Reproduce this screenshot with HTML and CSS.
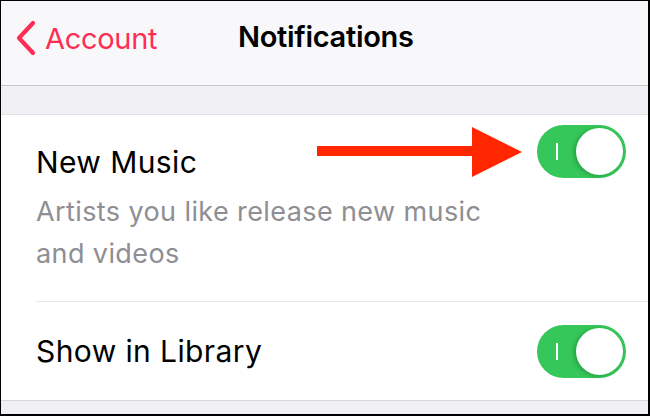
FILE: index.html
```html
<!DOCTYPE html>
<html>
<head>
<meta charset="utf-8">
<link rel="stylesheet" href="styles.css">
</head>
<body>
<div class="frame">
  <header class="nav">
    <div class="back">
      <svg class="chev" width="24" height="36" viewBox="0 0 24 36"><path d="M19 3 L5 18 L19 33" fill="none" stroke="#ff2d55" stroke-width="4.2" stroke-linecap="round" stroke-linejoin="round"/></svg>
      <span class="back-label">Account</span>
    </div>
    <div class="title">Notifications</div>
  </header>
  <div class="gap"></div>
  <section class="group">
    <div class="row row-first">
      <div class="row-text">
        <div class="label">New Music</div>
        <div class="sub">Artists you like release new music<br>and videos</div>
      </div>
      <div class="toggle"><span class="on-mark"></span><span class="knob"></span></div>
    </div>
    <div class="sep"></div>
    <div class="row row-second">
      <div class="label">Show in Library</div>
      <div class="toggle"><span class="on-mark"></span><span class="knob"></span></div>
    </div>
  </section>
  <div class="bottom"></div>
  <svg class="arrow" width="210" height="54" viewBox="0 0 210 54"><rect x="0" y="19" width="158" height="10" fill="#ff2600"/><polygon points="155,0 205,25 155,50" fill="#ff2600"/></svg>
</div>
</body>
</html>
```
FILE: styles.css
```css
* { box-sizing: border-box; }
html, body { margin: 0; padding: 0; }
body { width: 650px; height: 416px; overflow: hidden; background: #fff; font-family: Inter, "Liberation Sans", sans-serif; }
.frame {
  position: relative;
  width: 650px; height: 416px;
  border-style: solid; border-color: #000;
  border-width: 1px 2px 2px 1px;
  background: #f0f0f5;
  display: flex; flex-direction: column;
}
.nav {
  height: 85px;
  background: #f8f8fa;
  border-bottom: 1px solid #c4c4c9;
  position: relative;
  display: flex; align-items: center;
}
.back { display: flex; align-items: center; padding-left: 13px; margin-top: -10px; }
.chev { display: block; }
.back-label { color: #ff2d55; font-size: 29px; margin-left: 7px; letter-spacing: -0.3px; }
.title {
  position: absolute; left: 237px; top: 18px;
  font-size: 29px; font-weight: 600; color: #000; letter-spacing: -0.3px;
}
.gap { height: 29px; border-bottom: 1px solid #e2e2e6; }
.group { background: #fff; display: flex; flex-direction: column; height: 285px; }
.row { display: flex; align-items: center; justify-content: space-between; padding: 0 22px 0 35px; }
.row-first { height: 186px; align-items: flex-start; }
.row-first .row-text { padding-top: 28px; }
.row-first .toggle { margin-top: 10px; }
.label { font-size: 30px; color: #000; letter-spacing: 0.4px; line-height: 38px; }
.sub { font-size: 27px; color: #8e8e93; line-height: 42px; margin-top: 10px; letter-spacing: 0.4px; }
.sep { height: 1px; background: #e6e6e8; margin-left: 35px; }
.row-second { flex: 1; }
.toggle {
  position: relative;
  width: 89px; height: 53px; border-radius: 27px;
  background: #35c759;
  flex: none;
}
.on-mark { position: absolute; left: 19px; top: 18px; width: 2px; height: 17px; background: #fff; }
.knob {
  position: absolute; right: 3px; top: 3px;
  width: 47px; height: 47px; border-radius: 50%;
  background: #fff;
  box-shadow: -2px 1px 4px rgba(0,80,20,0.35);
}
.bottom { flex: 1; border-top: 1px solid #d8d8dc; }
.arrow { position: absolute; left: 316px; top: 126px; }
```
